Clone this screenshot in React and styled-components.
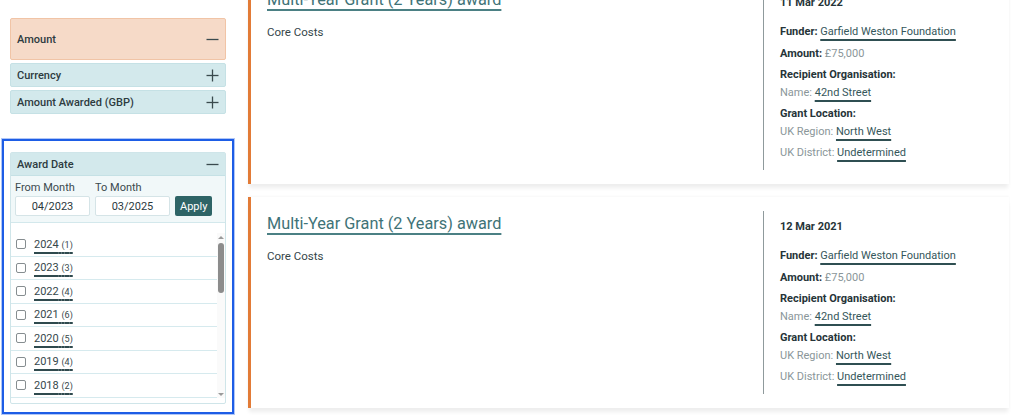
import React from 'react';
import styled, { createGlobalStyle } from 'styled-components';

const GlobalStyle = createGlobalStyle`
  html, body {
    margin: 0;
    padding: 0;
    background: #ffffff;
    overflow: hidden;
  }
  body {
    font-family: Roboto, "Liberation Sans", Arial, sans-serif;
    color: #2b393d;
  }
`;

const Page = styled.div`
  display: flex;
  align-items: flex-start;
  width: 1024px;
  height: 420px;
  overflow: hidden;
`;

// ---------- sidebar ----------
const Sidebar = styled.aside`
  width: 232px;
  margin-left: 2px;
  flex-shrink: 0;
  padding-top: 18px;
`;
const FilterGroup = styled.div`
  display: flex;
  flex-direction: column;
  gap: 3px;
  padding: 0 8px;
`;
const PanelHeader = styled.div`
  display: flex;
  align-items: center;
  justify-content: space-between;
  height: ${({ $tall }) => ($tall ? '40px' : '22px')};
  padding: 0 6px;
  background: ${({ $open }) => ($open ? '#f6dac8' : '#d3e9ec')};
  border: 1px solid ${({ $open }) => ($open ? '#f1c4a6' : '#c5e1e5')};
  border-radius: 2px;
  font-size: 11px;
  font-weight: 500;
  color: #2d3b3f;
`;
const FocusRing = styled.div`
  margin-top: 25px;
  border: 2px solid #1d5de6;
  box-shadow: 0 0 0 1px rgba(29, 93, 230, 0.35);
  padding: 11px 6px 8px 6px;
`;
const DatePanel = styled.div`
  border: 1px solid #cfe5e9;
  border-radius: 2px;
  background: #ffffff;
`;
const DateHeader = styled(PanelHeader)`
  border: none;
  border-bottom: 1px solid #c5e1e5;
  border-radius: 0;
  height: 22px;
`;
const RangeForm = styled.div`
  display: flex;
  align-items: flex-end;
  gap: 5px;
  padding: 5px 4px 6px 4px;
  background: #f1f8f9;
  border-bottom: 1px solid #d3e8ec;
`;
const Field = styled.label`
  display: flex;
  flex-direction: column;
  gap: 2px;
  font-size: 11px;
  color: #3b4a4e;
`;
const MonthInput = styled.input`
  box-sizing: border-box;
  width: 75px;
  height: 20px;
  border: 1px solid #d5e4e7;
  border-radius: 2px;
  background: #ffffff;
  font-family: inherit;
  font-size: 11px;
  color: #2b393d;
  text-align: center;
  padding: 0;
`;
const ApplyButton = styled.button`
  height: 20px;
  padding: 0 5px;
  border: none;
  border-radius: 2px;
  background: #2e6466;
  color: #ffffff;
  font-family: inherit;
  font-size: 11px;
`;
const ListArea = styled.div`
  display: flex;
  margin-top: 10px;
  margin-bottom: 5px;
  height: 165px;
`;
const YearList = styled.ul`
  flex: 1;
  list-style: none;
  margin: 0;
  padding: 0;
  overflow: hidden;
`;
const ScrollTrack = styled.div`
  display: flex;
  flex-direction: column;
  align-items: center;
  width: 8px;
  background: #fafafa;
`;
const ScrollArrow = styled.div`
  width: 0;
  height: 0;
  margin: 3px 0 2px 0;
  border-left: 3px solid transparent;
  border-right: 3px solid transparent;
  ${({ $down }) =>
    $down
      ? 'border-top: 3px solid #9a9a9a; margin-top: auto; margin-bottom: 2px;'
      : 'border-bottom: 3px solid #9a9a9a;'}
`;
const ScrollThumb = styled.div`
  width: 6px;
  height: 50px;
  margin-top: 2px;
  border-radius: 3px;
  background: #8c8c8c;
`;
const YearRow = styled.li`
  box-sizing: border-box;
  display: flex;
  align-items: center;
  gap: 8px;
  height: 23.5px;
  padding: 0 5px;
  border-bottom: 1px solid #d6eaee;
`;
const Check = styled.input`
  appearance: none;
  margin: 0;
  width: 10px;
  height: 10px;
  border: 1px solid #868d90;
  border-radius: 2px;
  background: #ffffff;
`;
const YearLink = styled.a`
  font-size: 11px;
  color: #36474b;
  text-decoration: underline;
  text-decoration-color: #2f4a4e;
  text-decoration-thickness: 1.5px;
  text-underline-offset: 4px;
  small {
    font-size: 9px;
  }
`;

// ---------- grants ----------
const Main = styled.main`
  flex: 1;
  margin-left: 14px;
  margin-right: 15px;
  margin-top: -27px;
  display: flex;
  flex-direction: column;
  gap: 13px;
`;
const Card = styled.article`
  display: flex;
  height: 211px;
  box-sizing: border-box;
  background: #ffffff;
  border-left: 3px solid #e27b37;
  box-shadow: 0 5px 4px -1px rgba(0, 0, 0, 0.07), 0 -1px 2px rgba(0, 0, 0, 0.03);
`;
const Summary = styled.div`
  flex: 1;
  padding: 15px 16px;
`;
const GrantTitle = styled.a`
  display: inline-block;
  font-size: 16.3px;
  line-height: 24px;
  color: #3f7377;
  text-decoration: underline;
  text-decoration-color: #4b8084;
  text-decoration-thickness: 2px;
  text-underline-offset: 4px;
`;
const Description = styled.p`
  margin: 12px 0 0 0;
  font-size: 11.5px;
  line-height: 16px;
  color: #35464a;
`;
const Details = styled.div`
  width: 229px;
  margin: 14px 0;
  padding: 8px 0 0 16px;
  border-left: 1px solid #8f9a9c;
`;
const InfoLine = styled.div`
  margin-top: ${({ $gap }) => $gap || 0}px;
  font-size: 11px;
  line-height: 16px;
  color: #8a9699;
  b {
    color: #263438;
    font-weight: 700;
  }
`;
const InfoLink = styled.a`
  color: #36575b;
  text-decoration: underline;
  text-decoration-color: #2f4f52;
  text-decoration-thickness: 1.5px;
  text-underline-offset: 4px;
`;

const Minus = () => (
  <svg width="13" height="13" viewBox="0 0 13 13">
    <line x1="0.5" y1="6.5" x2="12.5" y2="6.5" stroke="#3a4a4e" strokeWidth="1.3" />
  </svg>
);
const Plus = () => (
  <svg width="13" height="13" viewBox="0 0 13 13">
    <line x1="0.5" y1="6.5" x2="12.5" y2="6.5" stroke="#3a4a4e" strokeWidth="1.3" />
    <line x1="6.5" y1="0.5" x2="6.5" y2="12.5" stroke="#3a4a4e" strokeWidth="1.3" />
  </svg>
);

const years = [
  [2024, 1], [2023, 3], [2022, 4], [2021, 6], [2020, 5], [2019, 4], [2018, 2],
];

const grants = [
  { date: '11 Mar 2022' },
  { date: '12 Mar 2021' },
];

const GrantCard = ({ date }) => (
  <Card>
    <Summary>
      <GrantTitle>Multi-Year Grant (2 Years) award</GrantTitle>
      <Description>Core Costs</Description>
    </Summary>
    <Details>
      <InfoLine><b>{date}</b></InfoLine>
      <InfoLine $gap={13}><b>Funder:</b> <InfoLink>Garfield Weston Foundation</InfoLink></InfoLine>
      <InfoLine $gap={6}><b>Amount:</b> £75,000</InfoLine>
      <InfoLine $gap={5}><b>Recipient Organisation:</b></InfoLine>
      <InfoLine $gap={2}>Name: <InfoLink>42nd Street</InfoLink></InfoLine>
      <InfoLine $gap={5}><b>Grant Location:</b></InfoLine>
      <InfoLine $gap={2}>UK Region: <InfoLink>North West</InfoLink></InfoLine>
      <InfoLine $gap={5}>UK District: <InfoLink>Undetermined</InfoLink></InfoLine>
    </Details>
  </Card>
);

const App = () => (
  <>
    <GlobalStyle />
    <Page>
      <Sidebar>
        <FilterGroup>
          <PanelHeader $open $tall>Amount <Minus /></PanelHeader>
          <PanelHeader>Currency <Plus /></PanelHeader>
          <PanelHeader>Amount Awarded (GBP) <Plus /></PanelHeader>
        </FilterGroup>
        <FocusRing>
          <DatePanel>
            <DateHeader>Award Date <Minus /></DateHeader>
            <RangeForm>
              <Field>From Month<MonthInput defaultValue="04/2023" /></Field>
              <Field>To Month<MonthInput defaultValue="03/2025" /></Field>
              <ApplyButton>Apply</ApplyButton>
            </RangeForm>
            <ListArea>
              <YearList>
                {years.map(([year, count]) => (
                  <YearRow key={year}>
                    <Check type="checkbox" />
                    <YearLink>{year} <small>({count})</small></YearLink>
                  </YearRow>
                ))}
              </YearList>
              <ScrollTrack>
                <ScrollArrow />
                <ScrollThumb />
                <ScrollArrow $down />
              </ScrollTrack>
            </ListArea>
          </DatePanel>
        </FocusRing>
      </Sidebar>
      <Main>
        {grants.map((g) => (
          <GrantCard key={g.date} date={g.date} />
        ))}
      </Main>
    </Page>
  </>
);

export default App;
